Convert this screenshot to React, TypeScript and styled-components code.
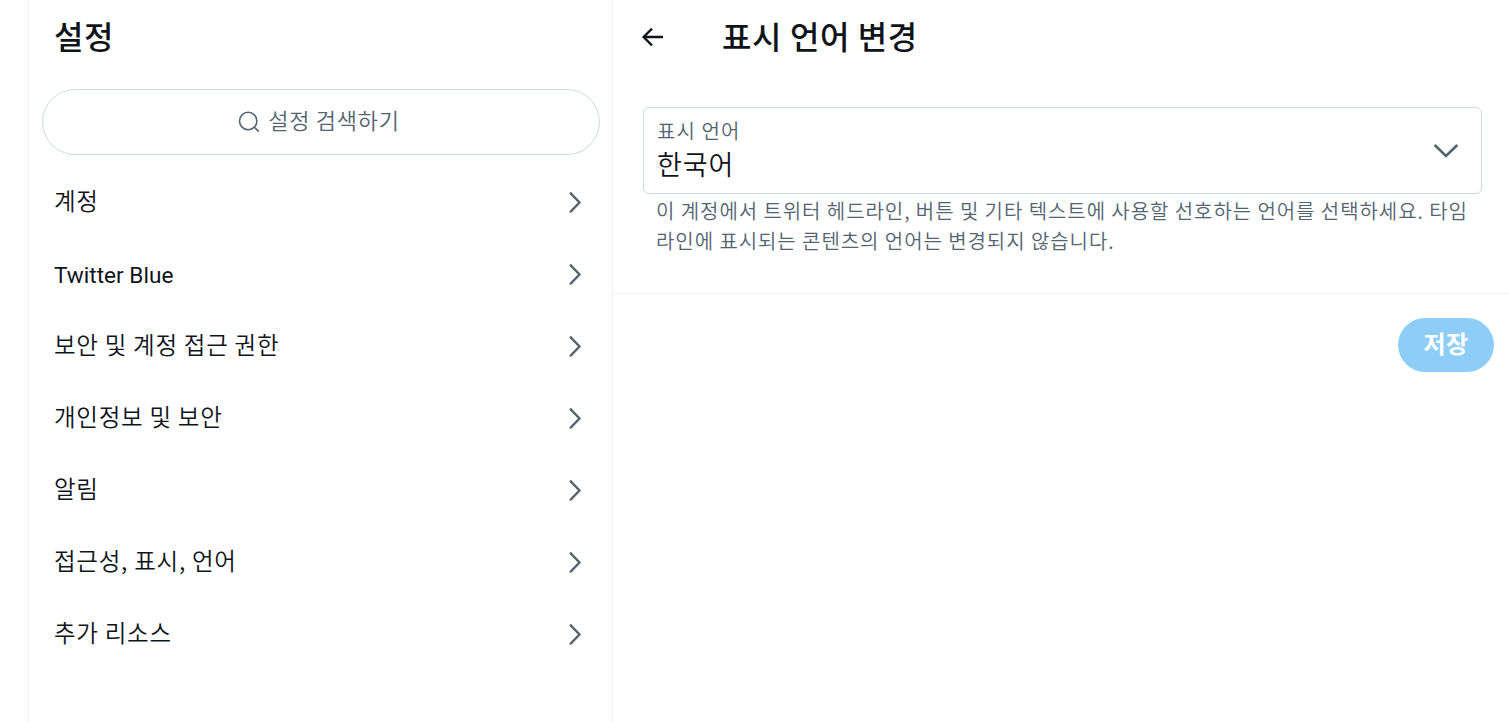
import styled, { createGlobalStyle } from 'styled-components';

const MENU_ITEMS = [
  { label: '계정' },
  { label: 'Twitter Blue', latin: true },
  { label: '보안 및 계정 접근 권한' },
  { label: '개인정보 및 보안' },
  { label: '알림' },
  { label: '접근성, 표시, 언어' },
  { label: '추가 리소스' },
];

const GlobalStyle = createGlobalStyle`
  * {
    box-sizing: border-box;
  }
  body {
    margin: 0;
    background: #fff;
    color: #0f1419;
    font-family: 'Noto Sans CJK KR', sans-serif;
    font-weight: 350;
  }
  h2, p {
    margin: 0;
  }
  button {
    font-family: inherit;
    font-weight: inherit;
    cursor: pointer;
  }
`;

const Layout = styled.div`
  display: flex;
  height: 722px;
  padding-left: 28px;
  overflow: hidden;
`;

const Sidebar = styled.section`
  width: 585px;
  flex-shrink: 0;
  border-left: 1px solid #eff3f4;
  border-right: 1px solid #eff3f4;
`;

const Title = styled.h2`
  font-size: 32px;
  line-height: 44px;
  font-weight: 500;
  letter-spacing: 0.6px;
  white-space: nowrap;
`;

const SidebarHeader = styled.header`
  height: 89px;
  padding: 13px 26px 0 25px;
`;

const SearchBox = styled.div`
  display: flex;
  align-items: center;
  justify-content: center;
  gap: 8px;
  height: 66px;
  margin: 0 12px 0 13px;
  padding-right: 4px;
  border: 1px solid #cfd9de;
  border-radius: 33px;
  color: #536471;
  font-size: 22px;
  letter-spacing: 0.75px;
  span {
    padding-bottom: 6px;
  }
`;

const Menu = styled.nav`
  padding-top: 11px;
`;

const MenuRow = styled.a`
  display: flex;
  align-items: center;
  justify-content: space-between;
  height: 72px;
  padding: 0 30px 0 25px;
  cursor: pointer;
`;

const MenuLabel = styled.span<{ $latin?: boolean }>`
  padding: ${({ $latin }) => ($latin ? '2px 0 0' : '0 0 4px')};
  font-family: ${({ $latin }) => ($latin ? 'Roboto, sans-serif' : 'inherit')};
  font-size: ${({ $latin }) => ($latin ? '22.6px' : '23.5px')};
  font-weight: ${({ $latin }) => ($latin ? 400 : 'inherit')};
  letter-spacing: ${({ $latin }) => ($latin ? '0' : '0.75px')};
`;

const Detail = styled.main`
  flex: 1;
`;

const DetailHeader = styled.header`
  display: flex;
  align-items: flex-start;
  gap: 57px;
  height: 107px;
  padding: 13px 0 0 28px;
  svg {
    margin-top: 13px;
  }
`;

const Form = styled.div`
  height: 187px;
  padding: 0 27px 0 30px;
  border-bottom: 1px solid #eff3f4;
`;

const SelectField = styled.button`
  display: flex;
  align-items: center;
  justify-content: space-between;
  width: 100%;
  height: 87px;
  padding: 0 22px 4px 13px;
  border: 1px solid #cfd9de;
  border-radius: 6px;
  background: #fff;
  color: #0f1419;
  text-align: left;
  svg {
    margin-top: 4px;
  }
`;

const FieldLabel = styled.div`
  font-size: 20px;
  line-height: 30px;
  letter-spacing: 1.1px;
  color: #536471;
`;

const FieldValue = styled.div`
  font-size: 27px;
  line-height: 36px;
  letter-spacing: 0.9px;
`;

const Hint = styled.p`
  padding: 2px 0 0 13px;
  font-size: 20px;
  line-height: 30px;
  letter-spacing: 0.93px;
  color: #536471;
  white-space: nowrap;
`;

const Actions = styled.div`
  display: flex;
  justify-content: flex-end;
  padding: 24px 15px 0 0;
`;

const SaveButton = styled.button`
  width: 96px;
  height: 54px;
  padding: 0 0 5px;
  border: 0;
  border-radius: 27px;
  background: #8ecdf8;
  color: #fff;
  font-size: 24px;
  font-weight: 700;
  letter-spacing: 0.4px;
`;

function SearchIcon() {
  return (
    <svg width="22" height="22" viewBox="0 0 22 22" fill="none" stroke="#536471" strokeWidth="1.6">
      <circle cx="10.2" cy="10" r="8.7" />
      <path d="M16.2 16l4.6 4.6" />
    </svg>
  );
}

function ChevronRight() {
  return (
    <svg width="14" height="22" viewBox="0 0 14 22" fill="none" stroke="#536471" strokeWidth="2.4">
      <path d="M2 1.7L11.5 11.5L2 21.3" />
    </svg>
  );
}

function ChevronDown() {
  return (
    <svg width="26" height="16" viewBox="0 0 26 16" fill="none" stroke="#536471" strokeWidth="2.6">
      <path d="M1.7 2L13 13L24.3 2" />
    </svg>
  );
}

function BackArrow() {
  return (
    <svg width="24" height="22" viewBox="0 0 24 22" fill="none" stroke="#0f1419" strokeWidth="2.3">
      <path d="M11 2.6L2.6 11L11 19.4M2.6 11H22" />
    </svg>
  );
}

export default function App() {
  return (
    <>
      <GlobalStyle />
      <Layout>
        <Sidebar>
          <SidebarHeader>
            <Title>설정</Title>
          </SidebarHeader>
          <SearchBox>
            <SearchIcon />
            <span>설정 검색하기</span>
          </SearchBox>
          <Menu>
            {MENU_ITEMS.map(({ label, latin }) => (
              <MenuRow key={label}>
                <MenuLabel $latin={latin}>{label}</MenuLabel>
                <ChevronRight />
              </MenuRow>
            ))}
          </Menu>
        </Sidebar>
        <Detail>
          <DetailHeader>
            <BackArrow />
            <Title>표시 언어 변경</Title>
          </DetailHeader>
          <Form>
            <SelectField>
              <div>
                <FieldLabel>표시 언어</FieldLabel>
                <FieldValue>한국어</FieldValue>
              </div>
              <ChevronDown />
            </SelectField>
            <Hint>
              이 계정에서 트위터 헤드라인, 버튼 및 기타 텍스트에 사용할 선호하는 언어를 선택하세요. 타임
              <br />
              라인에 표시되는 콘텐츠의 언어는 변경되지 않습니다.
            </Hint>
          </Form>
          <Actions>
            <SaveButton>저장</SaveButton>
          </Actions>
        </Detail>
      </Layout>
    </>
  );
}
